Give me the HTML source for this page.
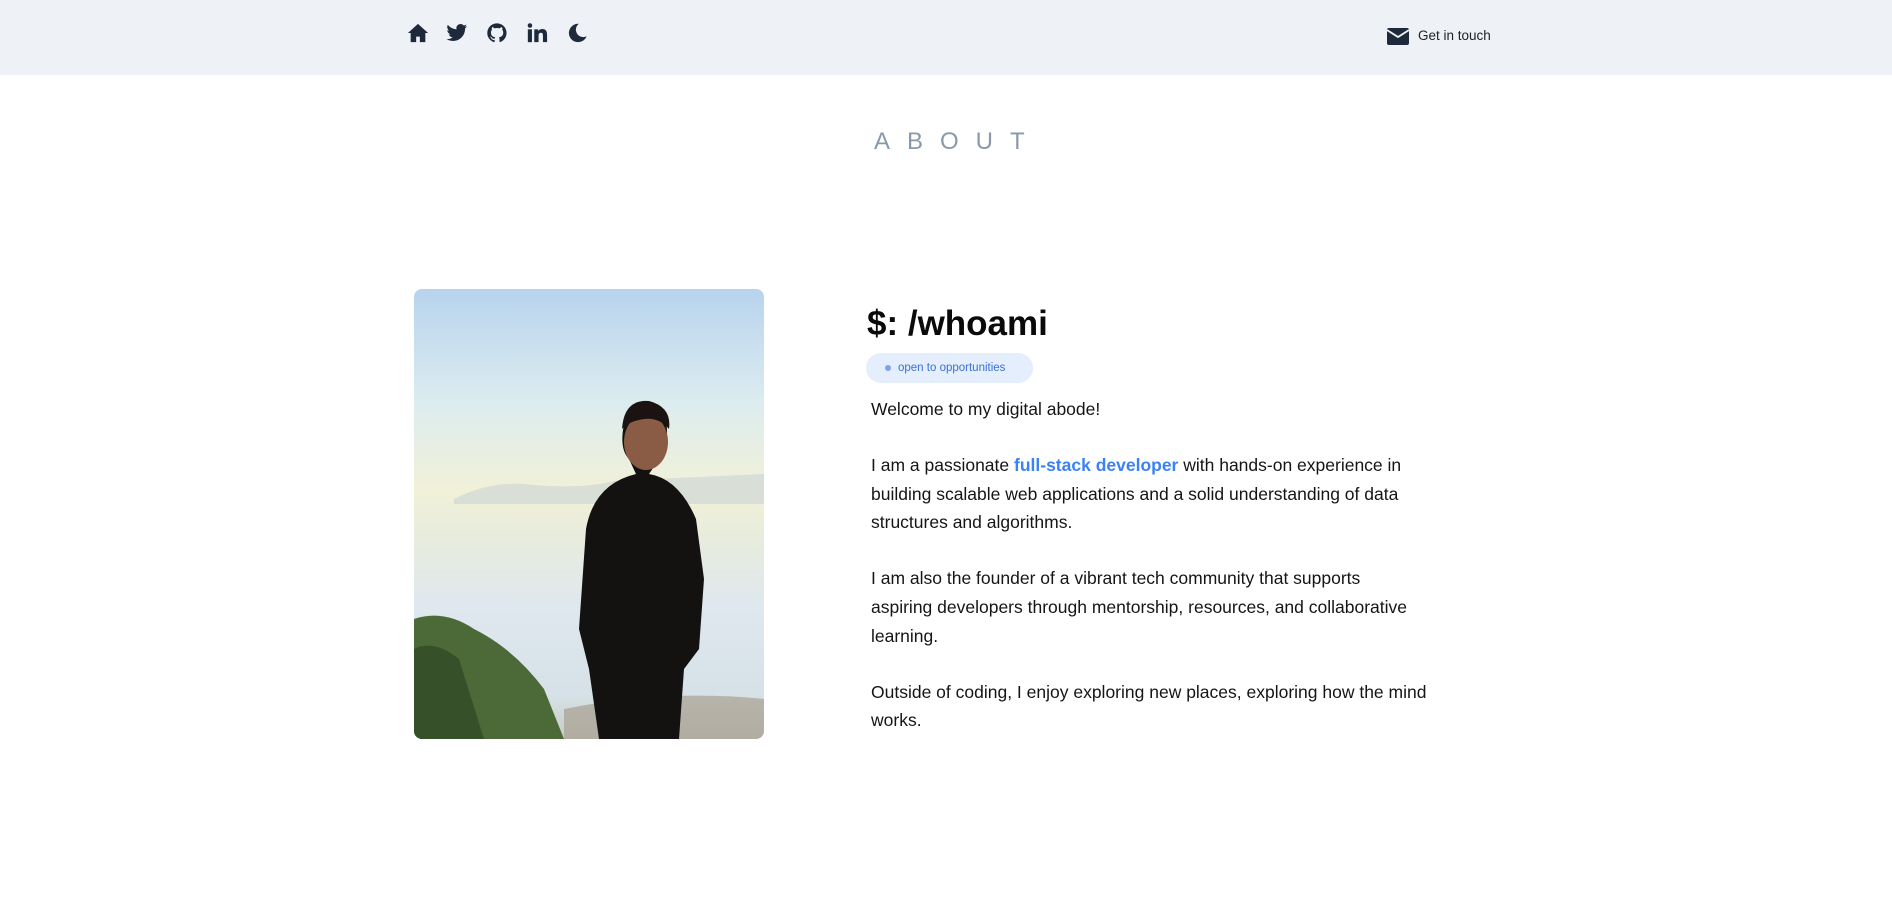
<!DOCTYPE html>
<html><head><meta charset="utf-8"><style>
*{margin:0;padding:0;box-sizing:border-box}
body{width:1892px;height:910px;background:#fff;font-family:"Liberation Sans",sans-serif;position:relative;overflow:hidden;color:#111}
.hdr{position:absolute;left:0;top:0;width:1892px;height:75px;background:#eef2f7}
.ic{position:absolute;top:22px;width:22px;height:22px}
.about{position:absolute;left:874px;top:128px;font-size:24px;letter-spacing:17px;color:#8a98ab}
.photo{position:absolute;left:414px;top:289px;width:350px;height:450px;border-radius:8px;overflow:hidden;
background:linear-gradient(180deg,#b7d3ee 0%,#dcecef 25%,#f1f1d8 45%,#e8ecdd 55%,#dfe8ee 70%,#d6e2e8 90%,#c8ccc4 100%)}
h1{position:absolute;left:867px;top:304px;font-size:35px;font-weight:bold;color:#0a0a0a}
.pill{position:absolute;left:866px;top:353px;width:167px;height:30px;border-radius:15px;background:#e4eefc;font-size:11.5px;color:#3b6fd8;line-height:30px;padding-left:19px}
.pill:before{content:"";position:absolute;left:19px;top:12px;width:6px;height:6px;border-radius:50%;background:#7ea3ec}
.pill span{margin-left:13px}
.txt{position:absolute;left:871px;top:395px;width:540px;font-size:17.5px;line-height:28.8px;color:#151515}
.txt p{margin-bottom:27px}
.txt b{color:#3b82f6}
.nw{white-space:nowrap}
.git{position:absolute;left:1418px;top:28px;font-size:13.5px;color:#222}
</style></head><body>
<div class="hdr">
<svg class="ic" style="left:407px" viewBox="0 0 24 24"><path d="M12 2L1 12h3v10h6v-6h4v6h6V12h3z" fill="#1e293b"/></svg>
<svg class="ic" style="left:446px" viewBox="0 0 24 24"><path d="M23 4.5a9 9 0 0 1-2.7.8 4.7 4.7 0 0 0 2-2.6 9 9 0 0 1-2.9 1.1A4.6 4.6 0 0 0 11.5 8 13 13 0 0 1 2 3.2a4.6 4.6 0 0 0 1.4 6.2 4.5 4.5 0 0 1-2-.6 4.6 4.6 0 0 0 3.7 4.6 4.6 4.6 0 0 1-2 .1 4.6 4.6 0 0 0 4.3 3.2A9.3 9.3 0 0 1 .5 18.6 13 13 0 0 0 7.6 20.7c8.5 0 13.2-7 13.2-13.2v-.6A9.4 9.4 0 0 0 23 4.5z" fill="#1e293b"/></svg>
<svg class="ic" style="left:486px" viewBox="0 0 24 24"><path d="M12 1.5a10.5 10.5 0 0 0-3.3 20.5c.5 0 .7-.2.7-.5v-2c-2.9.6-3.5-1.3-3.5-1.3-.5-1.2-1.2-1.5-1.2-1.5-1-.7.1-.7.1-.7 1 .1 1.6 1.1 1.6 1.1.9 1.6 2.5 1.1 3.1.9.1-.7.4-1.1.7-1.4-2.3-.3-4.8-1.2-4.8-5.2 0-1.1.4-2.1 1.1-2.8-.1-.3-.5-1.3.1-2.8 0 0 .9-.3 2.9 1.1a10 10 0 0 1 5.2 0c2-1.4 2.9-1.1 2.9-1.1.6 1.5.2 2.5.1 2.8.7.7 1.1 1.7 1.1 2.8 0 4-2.5 4.9-4.8 5.2.4.3.7 1 .7 1.9v2.9c0 .3.2.6.7.5A10.5 10.5 0 0 0 12 1.5z" fill="#1e293b"/></svg>
<svg class="ic" style="left:526px" viewBox="0 0 24 24"><rect x="2" y="8" width="4.5" height="14" fill="#1e293b"/><circle cx="4.3" cy="3.8" r="2.5" fill="#1e293b"/><path d="M9 8h4.3v2c.6-1.1 2.1-2.3 4.3-2.3 4.5 0 5.4 2.9 5.4 6.8V22h-4.5v-6.7c0-1.6 0-3.6-2.2-3.6s-2.6 1.7-2.6 3.5V22H9z" fill="#1e293b"/></svg>
<svg class="ic" style="left:566px" viewBox="0 0 24 24"><path d="M14 2a10 10 0 1 0 8.5 13.5A8 8 0 0 1 14 2z" fill="#1e293b"/></svg>
<svg style="position:absolute;left:1387px;top:28px" width="22" height="17" viewBox="0 0 22 17"><rect x="0" y="0" width="22" height="17" rx="2" fill="#1e293b"/><path d="M0 2l11 7 11-7" stroke="#eef2f7" stroke-width="1.8" fill="none"/></svg>
<div class="git">Get in touch</div>
</div>
<div class="about">ABOUT</div>
<div class="photo">
<svg width="350" height="450" viewBox="0 0 350 450">
<path d="M40 210 Q80 190 120 196 Q170 200 200 192 L350 185 L350 215 L40 215z" fill="#c9d2d6" opacity=".6"/>
<path d="M0 330 Q30 320 60 340 Q100 360 130 400 L150 450 L0 450z" fill="#4c6a37"/>
<path d="M0 360 Q20 350 45 370 L70 450 L0 450z" fill="#365129"/>
<path d="M150 420 Q250 400 350 410 L350 450 L150 450z" fill="#a8a092" opacity=".7"/>
<path d="M210 135 Q205 160 215 170 L222 185 Q180 195 172 240 L165 340 L175 380 L185 450 L265 450 L270 380 L285 360 L290 290 L282 230 Q265 190 235 185 L245 170 Q258 150 250 125 Q230 100 210 135z" fill="#141111"/>
<ellipse cx="232" cy="153" rx="22" ry="28" fill="#8a5c45"/>
<path d="M208 140 Q210 110 235 112 Q258 118 255 140 Q245 128 230 130 Q215 132 208 140z" fill="#1a1311"/>
</svg>
</div>
<h1>$: /whoami</h1>
<div class="pill"><span>open to opportunities</span></div>
<div class="txt"><p>Welcome to my digital abode!</p><p>I am a passionate <b>full-stack developer</b> with hands-on experience in building scalable web applications and a solid understanding of data structures and algorithms.</p><p>I am also the founder of a vibrant tech community that supports aspiring developers through mentorship, resources, and collaborative learning.</p><p><span class="nw">Outside of coding, I enjoy exploring new places, exploring how the mind</span><br>works.</p></div>
</body></html>
